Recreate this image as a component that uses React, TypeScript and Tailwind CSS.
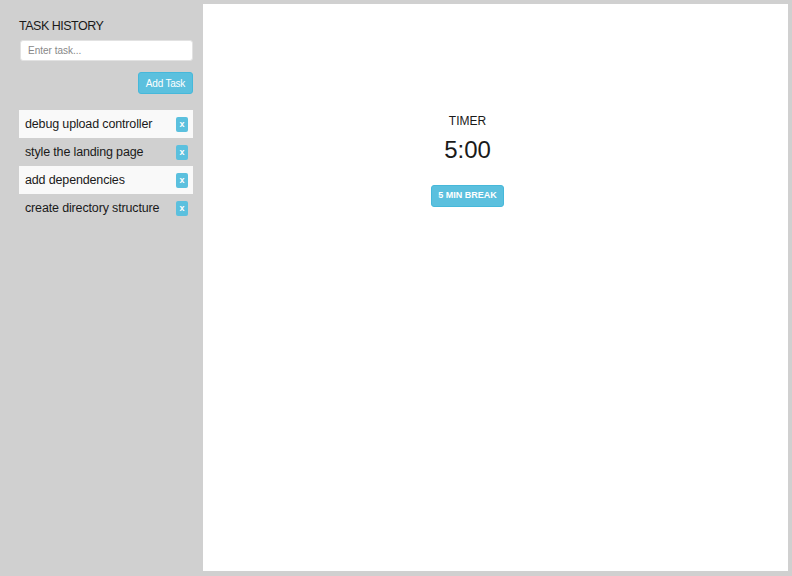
import React, { useState } from 'react';

const TASKS = [
  'debug upload controller',
  'style the landing page',
  'add dependencies',
  'create directory structure',
];

const App: React.FC = () => {
  const [tasks, setTasks] = useState<string[]>(TASKS);
  const [draft, setDraft] = useState('');

  const addTask = () => {
    if (!draft.trim()) return;
    setTasks([draft.trim(), ...tasks]);
    setDraft('');
  };

  return (
    <div
      className="flex w-[792px] h-[576px] bg-[#d0d0d0] text-[#1a1a1a]"
      style={{ fontFamily: '"Liberation Sans", Arial, sans-serif' }}
    >
      {/* sidebar */}
      <div className="w-[203px] shrink-0 pl-[19px] pr-[10px] pt-[19px]">
        <h2 className="text-[12.5px] leading-[15px] tracking-[-0.5px] uppercase">Task History</h2>
        <input
          value={draft}
          onChange={e => setDraft(e.target.value)}
          placeholder="Enter task..."
          className="mt-[6px] ml-px w-[173px] h-[21px] bg-white rounded-[3px] border border-[#e2e2e2] px-[7px] text-[10px] placeholder:text-[#888] outline-none"
        />
        <div className="flex justify-end mt-[11px]">
          <button
            onClick={addTask}
            className="w-[55px] h-[22px] bg-[#5bc0de] border border-[#46b8da] rounded-[3px] text-white text-[10px] tracking-[-0.2px]"
          >
            Add Task
          </button>
        </div>
        <ul className="mt-[16px]">
          {tasks.map((t, i) => (
            <li
              key={t + i}
              className={`flex items-center justify-between h-[28px] w-[174px] pl-[6px] pr-[5px] ${
                i % 2 === 0 ? 'bg-[#f9f9f9]' : ''
              }`}
            >
              <span className="text-[12.5px] tracking-[-0.15px]">{t}</span>
              <button
                onClick={() => setTasks(tasks.filter((_, j) => j !== i))}
                className="w-[12px] h-[15px] bg-[#5bc0de] rounded-[2px] text-white text-[9px] leading-[15px] font-bold"
              >
                x
              </button>
            </li>
          ))}
        </ul>
      </div>

      {/* main panel */}
      <div className="mt-[4px] mb-[5px] mr-[4px] flex-1 bg-white">
        <div className="w-[529px] flex flex-col items-center pt-[110px]">
          <h3 className="text-[12px] leading-[14px] uppercase">Timer</h3>
          <div className="mt-[8px] text-[24px] leading-[28px]">5:00</div>
          <button className="mt-[21px] w-[73px] h-[22px] bg-[#5bc0de] border border-[#46b8da] rounded-[3px] text-white text-[9px] font-bold uppercase">
            5 min break
          </button>
        </div>
      </div>
    </div>
  );
};

export default App;
